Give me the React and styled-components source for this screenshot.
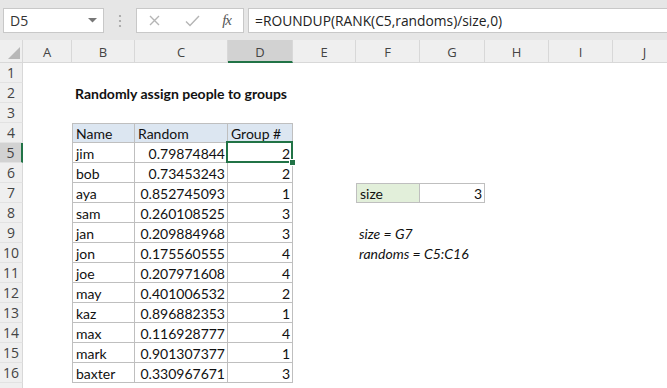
import React from 'react'
import styled, { createGlobalStyle, css } from 'styled-components'

const GlobalStyle = createGlobalStyle`
  html, body {
    margin: 0;
    padding: 0;
    background: #ffffff;
  }
  body {
    font-family: 'Lato', 'Liberation Sans', sans-serif;
  }
`

const Window = styled.div`
  width: 667px;
  height: 388px;
  overflow: hidden;
  display: flex;
  flex-direction: column;
  background: #ffffff;
`

const FormulaBar = styled.div`
  height: 40px;
  flex: 0 0 40px;
  box-sizing: border-box;
  background: #e6e6e6;
  display: flex;
  align-items: flex-start;
  padding: 8px 0 0 3px;
`

const NameBox = styled.div`
  width: 101px;
  height: 25px;
  box-sizing: border-box;
  background: #ffffff;
  border: 1px solid #c8c8c8;
  display: flex;
  align-items: center;
  justify-content: space-between;
  padding: 0 6px 0 6px;
  font-family: 'Open Sans', 'Liberation Sans', sans-serif;
  font-size: 14px;
  color: #333;
`

const Splitter = styled.div`
  width: 32px;
  height: 25px;
  display: flex;
  align-items: center;
  justify-content: center;
`

const FormulaButtons = styled.div`
  width: 108px;
  height: 25px;
  box-sizing: border-box;
  background: #ffffff;
  border: 1px solid #c8c8c8;
  display: flex;
  align-items: center;
  padding: 0 12px 0 12px;
`

const IconSlot = styled.div`
  width: ${(p) => p.$w}px;
  display: flex;
  align-items: center;
  justify-content: ${(p) => p.$justify || 'center'};
`

const Fx = styled.span`
  font-family: 'Liberation Serif', serif;
  font-style: italic;
  font-size: 15px;
  color: #555;
  letter-spacing: -1px;
`

const FormulaInput = styled.div`
  flex: 1;
  height: 25px;
  box-sizing: border-box;
  margin-left: 4px;
  background: #ffffff;
  border: 1px solid #c8c8c8;
  border-right: none;
  display: flex;
  align-items: center;
  padding-left: 6px;
  font-family: 'Open Sans', 'Liberation Sans', sans-serif;
  font-size: 13.8px;
  color: #222;
  white-space: nowrap;
`

const Sheet = styled.div`
  display: grid;
  grid-template-columns: 23px 49px 63px 93px 65px 63px 64px 65px 64px 64px 64px;
  grid-template-rows: 23px;
  grid-auto-rows: 20px;
`

const headerBase = css`
  box-sizing: border-box;
  display: flex;
  align-items: center;
  justify-content: center;
  font-family: 'Open Sans', 'Liberation Sans', sans-serif;
  font-size: 13px;
  color: #444;
  background: ${(p) => (p.$active ? '#d2d2d2' : '#efefef')};
`

const Corner = styled.div`
  ${headerBase};
  border-right: 1px solid #d8d8d8;
  border-bottom: 1px solid #d8d8d8;
  justify-content: flex-end;
  align-items: flex-end;
  padding: 0 2px 3px 0;
`

const ColHeader = styled.div`
  ${headerBase};
  border-right: 1px solid #d8d8d8;
  border-bottom: ${(p) => (p.$active ? '2px solid #217346' : '1px solid #d8d8d8')};
  padding-top: 2px;
`

const RowHeader = styled.div`
  ${headerBase};
  border-right: ${(p) => (p.$active ? '2px solid #217346' : '1px solid #d8d8d8')};
  border-bottom: 1px solid #e2e2e2;
  font-size: 14px;
`

const Cell = styled.div`
  position: relative;
  box-sizing: border-box;
  display: flex;
  align-items: center;
  justify-content: ${(p) => (p.$align === 'right' ? 'flex-end' : 'flex-start')};
  padding: 1px 2px 0 3px;
  font-family: 'Lato', 'Liberation Sans', sans-serif;
  font-size: 14px;
  color: #111;
  white-space: nowrap;
  overflow: visible;
  background: ${(p) => p.$fill || 'transparent'};
  font-weight: ${(p) => (p.$bold ? 700 : 400)};
  font-style: ${(p) => (p.$italic ? 'italic' : 'normal')};
  ${(p) =>
    p.$grid &&
    css`
      border-right: 1px solid #bfbfbf;
      border-bottom: 1px solid #bfbfbf;
    `}
  ${(p) => p.$left && 'border-left: 1px solid #bfbfbf;'}
  ${(p) => p.$top && 'border-top: 1px solid #bfbfbf;'}
  ${(p) =>
    p.$selected &&
    css`
      &::after {
        content: '';
        position: absolute;
        left: -2px;
        top: -2px;
        right: -1px;
        bottom: -1px;
        border: 2px solid #217346;
        pointer-events: none;
      }
      &::before {
        content: '';
        position: absolute;
        right: -4px;
        bottom: -4px;
        width: 5px;
        height: 5px;
        background: #217346;
        border: 1px solid #ffffff;
        z-index: 2;
      }
    `}
`

const columns = ['A', 'B', 'C', 'D', 'E', 'F', 'G', 'H', 'I', 'J']

const people = [
  ['jim', '0.79874844', '2'],
  ['bob', '0.73453243', '2'],
  ['aya', '0.852745093', '1'],
  ['sam', '0.260108525', '3'],
  ['jan', '0.209884968', '3'],
  ['jon', '0.175560555', '4'],
  ['joe', '0.207971608', '4'],
  ['may', '0.401006532', '2'],
  ['kaz', '0.896882353', '1'],
  ['max', '0.116928777', '4'],
  ['mark', '0.901307377', '1'],
  ['baxter', '0.330967671', '3'],
]

const getCell = (row, col) => {
  if (row === 2 && col === 'B') return { text: 'Randomly assign people to groups', bold: true }
  if (row === 4) {
    const heads = { B: 'Name', C: 'Random', D: 'Group #' }
    if (heads[col]) return { text: heads[col], fill: '#dce6f1', grid: true, left: col === 'B', top: true }
  }
  if (row >= 5 && row <= 16) {
    const p = people[row - 5]
    if (col === 'B') return { text: p[0], grid: true, left: true }
    if (col === 'C') return { text: p[1], grid: true, align: 'right' }
    if (col === 'D') return { text: p[2], grid: true, align: 'right', selected: row === 5 }
  }
  if (row === 7 && col === 'F') return { text: 'size', fill: '#e2efda', grid: true, left: true, top: true }
  if (row === 7 && col === 'G') return { text: '3', grid: true, top: true, align: 'right' }
  if (row === 9 && col === 'F') return { text: 'size = G7', italic: true }
  if (row === 10 && col === 'F') return { text: 'randoms = C5:C16', italic: true }
  return {}
}

// row 17 only peeks in at the bottom edge, its number is below the fold
const rows = Array.from({ length: 17 }, (_, i) => i + 1)

const App = () => {
  return (
    <Window>
      <GlobalStyle />
      <FormulaBar>
        <NameBox>
          <span>D5</span>
          <svg width="9" height="5" viewBox="0 0 9 5">
            <polygon points="0,0 9,0 4.5,4.5" fill="#777" />
          </svg>
        </NameBox>
        <Splitter>
          <svg width="4" height="14" viewBox="0 0 4 14">
            <circle cx="2" cy="2" r="1.1" fill="#a0a0a0" />
            <circle cx="2" cy="7" r="1.1" fill="#a0a0a0" />
            <circle cx="2" cy="12" r="1.1" fill="#a0a0a0" />
          </svg>
        </Splitter>
        <FormulaButtons>
          <IconSlot $w={20} $justify="flex-start">
            <svg width="11" height="11" viewBox="0 0 11 11">
              <path d="M1 1 L10 10 M10 1 L1 10" stroke="#b5b5b5" strokeWidth="1.4" fill="none" />
            </svg>
          </IconSlot>
          <IconSlot $w={46}>
            <svg width="15" height="12" viewBox="0 0 15 12">
              <path d="M1 6.5 L5 10.5 L14 1" stroke="#b5b5b5" strokeWidth="1.4" fill="none" />
            </svg>
          </IconSlot>
          <IconSlot $w={16} $justify="flex-end">
            <Fx>fx</Fx>
          </IconSlot>
        </FormulaButtons>
        <FormulaInput>=ROUNDUP(RANK(C5,randoms)/size,0)</FormulaInput>
      </FormulaBar>
      <Sheet>
        <Corner>
          <svg width="12" height="12" viewBox="0 0 12 12">
            <polygon points="12,0 12,12 0,12" fill="#b8b8b8" />
          </svg>
        </Corner>
        {columns.map((c) => (
          <ColHeader key={c} $active={c === 'D'}>
            {c}
          </ColHeader>
        ))}
        {rows.map((r) => (
          <React.Fragment key={r}>
            <RowHeader $active={r === 5}>{r < 17 ? r : ''}</RowHeader>
            {columns.map((c) => {
              const d = getCell(r, c)
              return (
                <Cell
                  key={c}
                  $fill={d.fill}
                  $align={d.align}
                  $bold={d.bold}
                  $italic={d.italic}
                  $grid={d.grid}
                  $left={d.left}
                  $top={d.top}
                  $selected={d.selected}
                >
                  {d.text}
                </Cell>
              )
            })}
          </React.Fragment>
        ))}
      </Sheet>
    </Window>
  )
}

export default App
